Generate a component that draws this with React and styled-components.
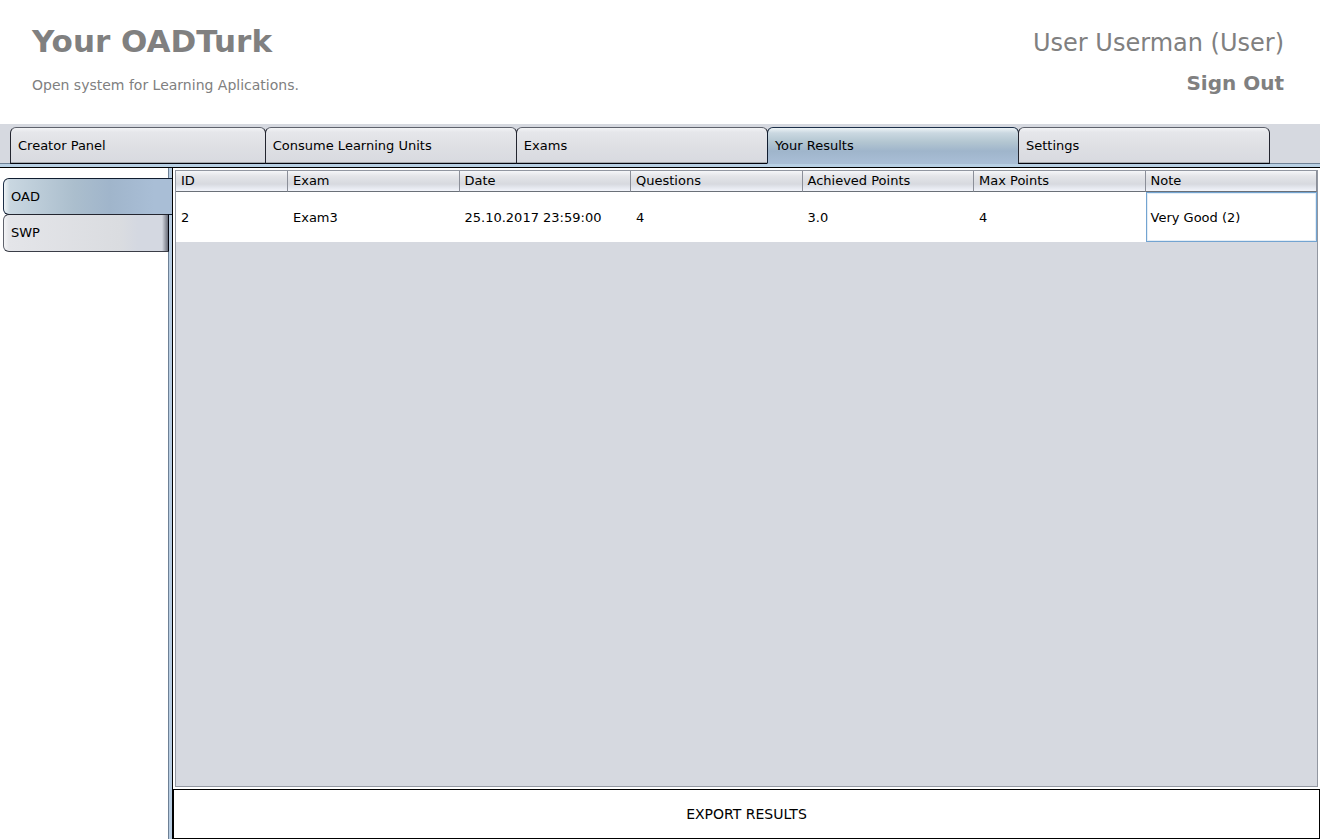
import React, { useState } from "react";
import styled, { createGlobalStyle, css } from "styled-components";

const GlobalStyle = createGlobalStyle`
  *, *::before, *::after { box-sizing: border-box; }
  body {
    margin: 0;
    background: #fff;
    color: #000;
    font: 13px/16px "DejaVu Sans", sans-serif;
  }
  button {
    font: inherit;
    color: inherit;
    text-align: left;
    cursor: pointer;
  }
`;

const Page = styled.div`
  display: flex;
  flex-direction: column;
  min-height: 100vh;
`;

const Header = styled.header`
  display: flex;
  justify-content: space-between;
  height: 124px;
  padding: 23px 36px 0 32px;
  color: #808080;
`;

const Brand = styled.div`
  display: flex;
  flex-direction: column;
  gap: 16px;
`;

const Title = styled.h1`
  margin: 0;
  font-size: 31px;
  line-height: 36px;
  font-weight: bold;
`;

const Tagline = styled.p`
  margin: 0;
  font-size: 14px;
  line-height: 20px;
`;

const Account = styled.div`
  display: flex;
  flex-direction: column;
  align-items: flex-end;
  gap: 6px;
  padding-top: 4px;
`;

const UserName = styled.div`
  font-size: 24px;
  line-height: 32px;
`;

const SignOut = styled.button`
  && {
    padding: 0;
    border: 0;
    background: none;
    font-size: 20px;
    line-height: 36px;
    font-weight: bold;
  }
`;

const TabBar = styled.nav`
  display: flex;
  height: 40px;
  padding: 3px 50px 0 10px;
  background: linear-gradient(#d6d9e0 39px, #6d8095 39px);
`;

const Tab = styled.button`
  flex: ${(p) => (p.$first ? 256 : 252)} 1 0;
  margin: 0 0 0 ${(p) => (p.$first ? 0 : -1)}px;
  padding: 0 7px;
  border: 1px solid #3a3d47;
  border-color: #5f626c #23252f #03040e;
  border-radius: 6px 6px 0 0;
  background: linear-gradient(#f3f4f6, #e6e7eb 4px, #dfe0e4 17px, #d8dae0 34px, #a5aaae 34px);
  ${(p) =>
    p.$selected &&
    css`
      border-color: #1c2f48 #101d30 #a9bed4;
      background: linear-gradient(#edf3f6, #cad8e1 5px, #b3c6d1 14px, #9fb5cb 23px, #a9bed6);
    `}
`;

const Divider = styled.div`
  height: 4px;
  background: #b8d0e4;
  border-bottom: 1px solid #000;
`;

const Main = styled.div`
  display: flex;
  flex: 1;
`;

const Sidebar = styled.nav`
  display: flex;
  flex-direction: column;
  align-items: flex-start;
  flex: 0 0 173px;
  padding: 10px 0 0 3px;
  border-right: 1px solid #000;
  background: linear-gradient(to right, #fff 168px, #6d8095 168px 169px, #b8cde2 169px);
`;

const SideTab = styled.button`
  width: 166px;
  height: 38px;
  margin: -1px 0 0;
  padding: 0 7px;
  border: 1px solid #03040e;
  border-color: #23252f #03040e #3a3d47 #5f626c;
  border-radius: 6px 0 0 6px;
  background: linear-gradient(to right, #f3f4f6, #e4e5e9 5px, #dadce0 116px, #d4d8e1 134px, #d4d8e1 158px, #686c78);
  ${(p) =>
    p.$selected &&
    css`
      width: 169px;
      height: 37px;
      margin: 0;
      border-color: #101d30 #a9bed6 #101d30 #1c2f48;
      border-right: 0;
      background: linear-gradient(to right, #edf3f6, #c9d7e1 6px, #abbecd 70px, #a0b5cb 106px, #a9bed6 150px);
    `}
`;

const Content = styled.main`
  display: flex;
  flex-direction: column;
  flex: 1;
  min-width: 0;
`;

const TablePane = styled.div`
  flex: 1;
  margin: 2px;
  border: 1px solid #9297a1;
  background: #d6d9e0;
`;

const Table = styled.table`
  width: 100%;
  table-layout: fixed;
  border-collapse: separate;
  border-spacing: 0;
`;

const HeadCell = styled.th`
  width: ${(p) => (p.$narrow ? "112px" : "auto")};
  height: 21px;
  padding: 0 5px;
  border-right: 1px solid #8b8f99;
  border-bottom: 1px solid #6a7078;
  background: linear-gradient(#f6f7f9, #e4e5e9 5px, #d7d9df 13px, #e2e5ec 16px, #f2f4fa);
  font-weight: normal;
  text-align: left;
`;

const Cell = styled.td`
  height: 50px;
  padding: 2px 5px 0;
  background: #fff;
  ${(p) =>
    p.$focused &&
    css`
      padding: 2px 4px 0;
      border: 1px solid #73a4d1;
      box-shadow: inset 0 0 0 1px #e3edf6;
    `}
`;

const ExportButton = styled.button`
  height: 50px;
  padding: 0;
  border: 1px solid #000;
  background: #fff;
  && {
    font-size: 14px;
    text-align: center;
  }
`;

const sections = ["Creator Panel", "Consume Learning Units", "Exams", "Your Results", "Settings"];
const courses = ["OAD", "SWP"];
const columns = ["ID", "Exam", "Date", "Questions", "Achieved Points", "Max Points", "Note"];
const results = [["2", "Exam3", "25.10.2017 23:59:00", "4", "3.0", "4", "Very Good (2)"]];

export default function App() {
  const [section, setSection] = useState("Your Results");
  const [course, setCourse] = useState("OAD");

  return (
    <Page>
      <GlobalStyle />
      <Header>
        <Brand>
          <Title>Your OADTurk</Title>
          <Tagline>Open system for Learning Aplications.</Tagline>
        </Brand>
        <Account>
          <UserName>User Userman (User)</UserName>
          <SignOut type="button">Sign Out</SignOut>
        </Account>
      </Header>
      <TabBar>
        {sections.map((name, i) => (
          <Tab
            key={name}
            type="button"
            $first={i === 0}
            $selected={name === section}
            aria-pressed={name === section}
            onClick={() => setSection(name)}
          >
            {name}
          </Tab>
        ))}
      </TabBar>
      <Divider />
      <Main>
        <Sidebar>
          {courses.map((name) => (
            <SideTab
              key={name}
              type="button"
              $selected={name === course}
              aria-pressed={name === course}
              onClick={() => setCourse(name)}
            >
              {name}
            </SideTab>
          ))}
        </Sidebar>
        <Content>
          <TablePane>
            <Table>
              <thead>
                <tr>
                  {columns.map((name, i) => (
                    <HeadCell key={name} scope="col" $narrow={i === 0}>
                      {name}
                    </HeadCell>
                  ))}
                </tr>
              </thead>
              <tbody>
                {results.map((row) => (
                  <tr key={row[0]}>
                    {row.map((value, i) => (
                      <Cell key={columns[i]} $focused={i === row.length - 1}>
                        {value}
                      </Cell>
                    ))}
                  </tr>
                ))}
              </tbody>
            </Table>
          </TablePane>
          <ExportButton type="button">EXPORT RESULTS</ExportButton>
        </Content>
      </Main>
    </Page>
  );
}
